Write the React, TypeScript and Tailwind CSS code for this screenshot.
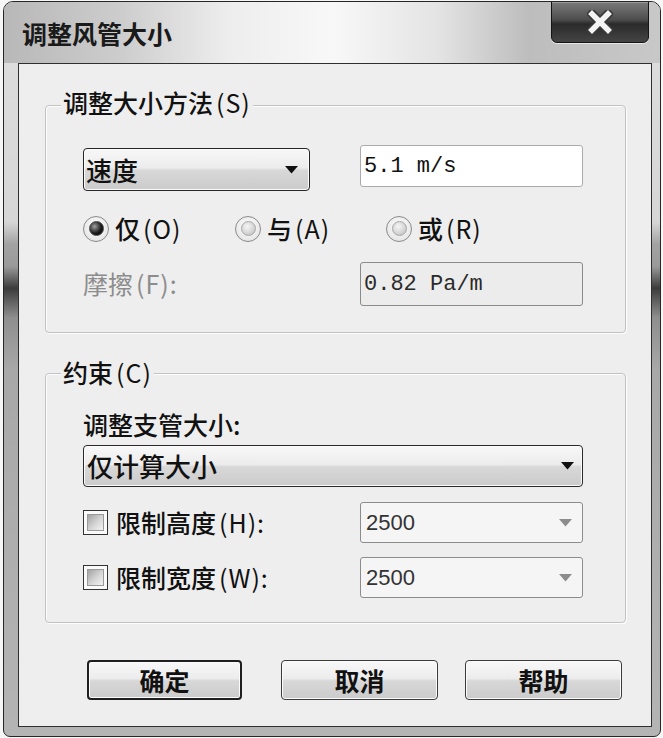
import React from 'react'

const cjk = "font-['Noto_Sans_CJK_SC',sans-serif]"
const mono = "font-['Liberation_Mono',monospace]"
const sans = "font-['Liberation_Sans',sans-serif]"

function Arrow({ dim = false }: { dim?: boolean }) {
  return (
    <svg width="13" height="8" viewBox="0 0 13 8">
      <polygon points="0,0 13,0 6.5,7.5" fill={dim ? '#8c8c8c' : '#111'} />
    </svg>
  )
}

// 中文 + 快捷键部分，如 "仅" + "(O)"
function Lbl({ cn, en }: { cn: string; en: string }) {
  return (
    <span className="inline-flex items-baseline">
      <span>{cn}</span>
      <span className="ml-[3px] tracking-[1px] font-normal">{en}</span>
    </span>
  )
}

function Radio({ checked = false }: { checked?: boolean }) {
  return (
    <span className="w-[26px] h-[26px] shrink-0 rounded-full border border-[#8a8a8a] bg-[radial-gradient(circle_at_50%_40%,#ffffff_0%,#dedede_100%)] flex items-center justify-center">
      {checked ? (
        <span className="w-[15px] h-[15px] rounded-full border border-[#444] bg-[radial-gradient(circle_at_35%_35%,#a0a0a0_0%,#1c1c1c_55%,#000_100%)]" />
      ) : (
        <span className="w-[15px] h-[15px] rounded-full border border-[#a6a6a6] bg-[radial-gradient(circle_at_40%_35%,#f6f6f6_0%,#bcbcbc_100%)]" />
      )}
    </span>
  )
}

function Checkbox() {
  return (
    <span className="w-[25px] h-[25px] shrink-0 border border-[#333] bg-[#fafafa] p-[3px] flex">
      <span className="flex-1 border border-[#9a9a9a] bg-[linear-gradient(135deg,#a2a2a2_0%,#d6d6d6_55%,#f4f4f4_100%)]" />
    </span>
  )
}

function Legend({ cn, en, top }: { cn: string; en: string; top: string }) {
  return (
    <span className={`absolute left-[15px] ${top} px-[2px] bg-[#eeeeee] text-[25px] leading-[28px] font-medium text-[#111] ${cjk}`}>
      <Lbl cn={cn} en={en} />
    </span>
  )
}

const btnFace =
  'bg-[linear-gradient(to_bottom,#f8f8f8_0%,#ececec_46%,#d8d8d8_52%,#cbcbcb_100%)] shadow-[inset_0_0_0_1px_#fbfbfb]'

function DialogButton({ label, primary = false, width }: { label: string; primary?: boolean; width: string }) {
  return (
    <button
      className={`${width} h-[40px] rounded-[4px] ${btnFace} ${primary ? 'border-2 border-[#1f1f1f]' : 'border border-[#3a3a3a]'} flex items-center justify-center text-[25px] leading-none font-semibold text-[#111] ${cjk}`}
    >
      {label}
    </button>
  )
}

function Combo({ value }: { value: string }) {
  return (
    <div className="ml-auto w-[223px] h-[41px] rounded-[3px] border border-[#8c8c8c] bg-[#f5f5f5] flex items-center justify-between pl-[5px] pr-[10px]">
      <span className={`text-[22px] text-[#333] ${sans}`}>{value}</span>
      <Arrow dim />
    </div>
  )
}

export default function App() {
  return (
    <div className="w-[663px] h-[738px] bg-[#f6f6f6] overflow-hidden">
      <div className="ml-[3px] mt-[1px] w-[658px] h-[736px] rounded-t-[10px] rounded-b-[7px] border border-[#262626] overflow-hidden flex flex-col bg-[linear-gradient(to_bottom,#dedede_0%,#d6d6d6_30%,#a2a2a2_33%,#9a9a9a_36%,#3c3c3c_39%,#8e8e8e_43%,#a8a8a8_50%,#b4b4b4_100%)]">
        {/* 标题栏 */}
        <div className="h-[61px] shrink-0 flex items-start justify-between bg-[linear-gradient(90deg,#b8b8b8_0%,#cdcdcd_18%,#ededed_34%,#f8f8f8_50%,#e4e4e4_66%,#bdbdbd_80%,#c8c8c8_100%)]">
          <span className={`ml-[18px] mt-[15px] text-[25px] leading-[32px] font-bold text-[#1a1a1a] ${cjk}`}>调整风管大小</span>
          <div className="mr-[11px] w-[98px] h-[42px] -mt-[1px] rounded-b-[6px] border border-[#141414] bg-[linear-gradient(to_bottom,#7a7a7a_0%,#4c4c4c_45%,#2a2a2a_55%,#454545_100%)] shadow-[inset_0_1px_0_#9a9a9a,0_1px_0_#e8e8e8] flex items-center justify-center">
            <svg width="26" height="24" viewBox="0 0 26 24">
              <path d="M5 4 L21 20 M21 4 L5 20" stroke="#3a3a3a" strokeWidth="9" strokeLinecap="square" />
              <path d="M5 4 L21 20 M21 4 L5 20" stroke="#f4f4f4" strokeWidth="5.5" strokeLinecap="square" />
            </svg>
          </div>
        </div>

        {/* 客户区 */}
        <div className={`ml-[14px] mr-[8px] h-[664px] border border-[#2f2f2f] bg-[#eeeeee] pt-[41px] pl-[26px] pr-[25px] ${cjk}`}>
          {/* 调整大小方法 */}
          <div className="relative rounded-[4px] border border-[#c2c2c2] shadow-[inset_1px_1px_0_#fdfdfd,1px_1px_0_#fdfdfd] pt-[39px] pl-[37px] pr-[42px] pb-[26px]">
            <Legend cn="调整大小方法" en="(S)" top="-top-[18px]" />
            <div className="flex items-start justify-between">
              <div className={`mt-[3px] w-[227px] h-[43px] rounded-[4px] border-[1.5px] border-[#262626] ${btnFace} flex items-center justify-between pl-[2px] pr-[11px]`}>
                <span className="text-[26px] leading-none font-medium text-[#111]">速度</span>
                <Arrow />
              </div>
              <div className="w-[223px] h-[42px] rounded-[3px] border border-[#ababab] bg-white flex items-center pl-[3px]">
                <span className={`text-[22px] text-[#111] ${mono}`}>5.1 m/s</span>
              </div>
            </div>
            <div className="mt-[24px] h-[27px] flex items-center text-[25px] font-medium text-[#111]">
              <label className="w-[152px] flex items-center gap-[6px]">
                <Radio checked />
                <Lbl cn="仅" en="(O)" />
              </label>
              <label className="w-[151px] flex items-center gap-[6px]">
                <Radio />
                <Lbl cn="与" en="(A)" />
              </label>
              <label className="flex items-center gap-[6px]">
                <Radio />
                <Lbl cn="或" en="(R)" />
              </label>
            </div>
            <div className="mt-[20px] flex items-center justify-between">
              <span className="text-[25px] text-[#8c8c8c]">
                <Lbl cn="摩擦" en="(F):" />
              </span>
              <div className="w-[223px] h-[44px] rounded-[3px] border border-[#8a8a8a] bg-[#ececec] flex items-center pl-[3px]">
                <span className={`text-[22px] text-[#2a2a2a] ${mono}`}>0.82 Pa/m</span>
              </div>
            </div>
          </div>

          {/* 约束 */}
          <div className="relative mt-[40px] rounded-[4px] border border-[#c2c2c2] shadow-[inset_1px_1px_0_#fdfdfd,1px_1px_0_#fdfdfd] pt-[36px] pl-[37px] pr-[42px] pb-[24px]">
            <Legend cn="约束" en="(C)" top="-top-[16px]" />
            <div className="text-[25px] leading-[28px] font-medium text-[#111]">调整支管大小:</div>
            <div className={`mt-[7px] h-[42px] rounded-[4px] border-[1.5px] border-[#2a2a2a] ${btnFace} flex items-center justify-between pl-[3px] pr-[8px]`}>
              <span className="text-[26px] leading-none font-medium text-[#111]">仅计算大小</span>
              <Arrow />
            </div>
            <div className="mt-[15px] h-[41px] flex items-center">
              <Checkbox />
              <span className="ml-[8px] text-[25px] font-medium text-[#111]">
                <Lbl cn="限制高度" en="(H):" />
              </span>
              <Combo value="2500" />
            </div>
            <div className="mt-[14px] h-[41px] flex items-center">
              <Checkbox />
              <span className="ml-[8px] text-[25px] font-medium text-[#111]">
                <Lbl cn="限制宽度" en="(W):" />
              </span>
              <Combo value="2500" />
            </div>
          </div>

          {/* 按钮 */}
          <div className="mt-[37px] ml-[42px] flex">
            <DialogButton label="确定" primary width="w-[155px]" />
            <div className="ml-[39px]">
              <DialogButton label="取消" width="w-[157px]" />
            </div>
            <div className="ml-[27px]">
              <DialogButton label="帮助" width="w-[157px]" />
            </div>
          </div>
        </div>
      </div>
    </div>
  )
}
